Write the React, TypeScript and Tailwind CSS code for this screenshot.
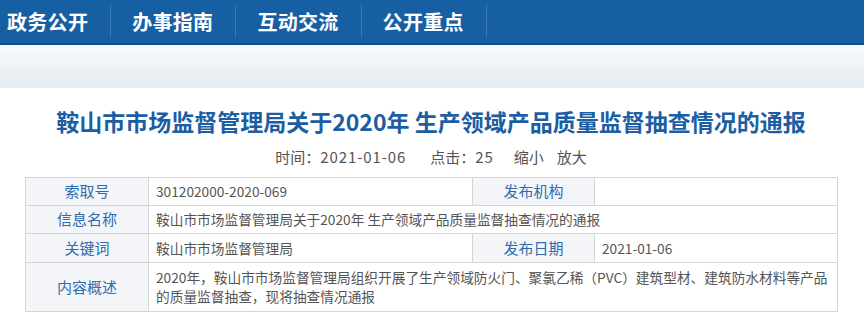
const navItems = ['政务公开', '办事指南', '互动交流', '公开重点']

const font = { fontFamily: '"Noto Sans CJK SC", "Noto Sans", sans-serif' }

function NavBar() {
  return (
    <div className="h-[45px] bg-[#175fa3] border-b-2 border-[#0f4d8c] flex items-stretch pl-[7px]">
      {navItems.map((label, i) => (
        <div key={label} className="flex items-stretch">
          <div
            className={`flex items-center text-[20px] font-bold text-white leading-none tracking-[0.3px] ${
              i === 0 ? 'pr-[22px]' : 'pl-[21px] pr-[22px]'
            }`}
          >
            {label}
          </div>
          <div className="my-[5px] w-[1px] bg-[#0f5291] border-r border-[#3a78b5]" />
        </div>
      ))}
    </div>
  )
}

function Label({ children, colSpan }: { children: React.ReactNode; colSpan?: number }) {
  return (
    <td
      colSpan={colSpan}
      className="border border-[#d6d6d6] bg-[#f3f5f8] text-center text-[15px] text-[#2d6cae] align-middle"
    >
      {children}
    </td>
  )
}

function Value({ children, colSpan }: { children?: React.ReactNode; colSpan?: number }) {
  return (
    <td
      colSpan={colSpan}
      className="border border-[#d6d6d6] bg-white px-[7px] text-[13.7px] text-[#555] leading-[19px] align-middle"
    >
      {children}
    </td>
  )
}

export default function App() {
  return (
    <div className="w-[868px] h-[327px] bg-white overflow-hidden" style={font}>
      <div className="w-[864px]">
        <NavBar />
        <div className="h-[43px] bg-gradient-to-b from-[#f8f9fb] to-[#e5ebf2]" />

        <div className="w-[862px] px-[25px]">
          <h1 className="mt-[17px] h-[32px] flex items-center justify-center text-[23px] font-bold text-[#1b5ea3] leading-none whitespace-nowrap">
            鞍山市市场监督管理局关于2020年 生产领域产品质量监督抽查情况的通报
          </h1>

          <div className="mt-[8px] h-[22px] flex items-center justify-center text-[15px] text-[#555] leading-none whitespace-nowrap">
            <span>时间：</span>
            <span className="tracking-[0.9px]">2021-01-06</span>
            <span className="ml-[24px]">点击：</span>
            <span className="tracking-[0.9px]">25</span>
            <span className="ml-[20px]">缩小</span>
            <span className="ml-[13px]">放大</span>
          </div>

          <table className="mt-[10px] w-[812px] border-collapse table-fixed">
            <colgroup>
              <col className="w-[123px]" />
              <col className="w-[324px]" />
              <col className="w-[122px]" />
              <col className="w-[243px]" />
            </colgroup>
            <tbody>
              <tr className="h-[28px]">
                <Label>索取号</Label>
                <Value>301202000-2020-069</Value>
                <Label>发布机构</Label>
                <Value />
              </tr>
              <tr className="h-[28px]">
                <Label>信息名称</Label>
                <Value colSpan={3}>鞍山市市场监督管理局关于2020年 生产领域产品质量监督抽查情况的通报</Value>
              </tr>
              <tr className="h-[29px]">
                <Label>关键词</Label>
                <Value>鞍山市市场监督管理局</Value>
                <Label>发布日期</Label>
                <Value>2021-01-06</Value>
              </tr>
              <tr className="h-[49px]">
                <Label>内容概述</Label>
                <Value colSpan={3}>
                  2020年，鞍山市市场监督管理局组织开展了生产领域防火门、聚氯乙稀（PVC）建筑型材、建筑防水材料等产品的质量监督抽查，现将抽查情况通报
                </Value>
              </tr>
            </tbody>
          </table>
        </div>
      </div>
    </div>
  )
}
